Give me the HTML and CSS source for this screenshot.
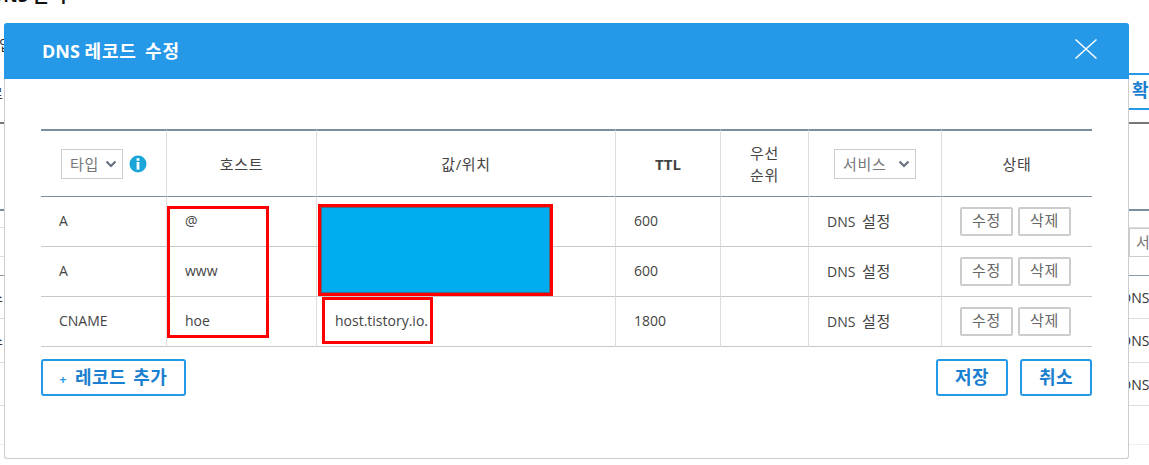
FILE: index.html
```html
<!DOCTYPE html>
<html lang="ko">
<head>
<meta charset="utf-8">
<title>DNS 레코드 수정</title>
<link rel="stylesheet" href="styles.css">
</head>
<body>
<div class="page">
  <h1 class="page-title">DNS <span class="ko-title">관리</span></h1>
  <div class="strips">
    <div class="strip strip-left">
      <div class="l-a">타입</div>
      <div class="l-b">로</div>
      <div class="l-c"></div>
      <div class="l-d"></div>
      <div class="l-e"></div>
      <div class="l-f"></div>
      <div class="l-row l-first">스</div>
      <div class="l-row l-tall">스</div>
      <div class="l-row">C</div>
      <div class="l-j"></div>
    </div>
    <div class="strip strip-right">
      <div class="r-tab">확인</div>
      <div class="r-rule"></div>
      <div class="r-head"></div>
      <div class="r-select-row"><span class="r-select">서비스</span></div>
      <div class="r-row r-first">DNS 설정</div>
      <div class="r-row r-tall">DNS 설정</div>
      <div class="r-row">DNS 설정</div>
      <div class="r-last"></div>
    </div>
  </div>
</div>

<section class="modal">
  <header class="modal-head">
    <h2 class="modal-title">DNS <span class="ko-title">레코드 수정</span></h2>
    <svg class="close" viewBox="0 0 24 22" width="24" height="22" aria-label="닫기"><path d="M1.5 1.5 22.5 20.5M22.5 1.5 1.5 20.5" fill="none" stroke="#fff" stroke-width="1.5"/></svg>
  </header>
  <div class="modal-body">
    <div class="table-wrap">
      <table class="records">
        <thead>
          <tr>
            <th class="c-type">
              <div class="type-head">
                <span class="fake-select sel-type"><span class="ko">타입</span><svg class="chev" viewBox="0 0 12 8" width="12" height="8"><path d="M1.5 1.5 6 6l4.5-4.5" fill="none" stroke="#67727e" stroke-width="2.2"/></svg></span>
                <svg class="info" viewBox="0 0 18 18" width="18" height="18"><circle cx="9" cy="9" r="8.5" fill="#1ba6d9"/><rect x="7.6" y="3.2" width="2.8" height="2.6" fill="#fff"/><rect x="7.6" y="7" width="2.8" height="7.6" fill="#fff"/></svg>
              </div>
            </th>
            <th class="c-host ko">호스트</th>
            <th class="c-value ko">값/위치</th>
            <th class="c-ttl ttl-head">TTL</th>
            <th class="c-prio ko">우선<br>순위</th>
            <th class="c-svc"><span class="fake-select sel-svc"><span class="ko">서비스</span><svg class="chev" viewBox="0 0 12 8" width="12" height="8"><path d="M1.5 1.5 6 6l4.5-4.5" fill="none" stroke="#67727e" stroke-width="2.2"/></svg></span></th>
            <th class="c-state ko">상태</th>
          </tr>
        </thead>
        <tbody>
          <tr>
            <td>A</td><td>@</td><td></td><td>600</td><td></td><td>DNS <span class="ko ko-gap">설정</span></td>
            <td><div class="row-btns"><button class="mini">수정</button><button class="mini">삭제</button></div></td>
          </tr>
          <tr>
            <td>A</td><td>www</td><td></td><td>600</td><td></td><td>DNS <span class="ko ko-gap">설정</span></td>
            <td><div class="row-btns"><button class="mini">수정</button><button class="mini">삭제</button></div></td>
          </tr>
          <tr>
            <td>CNAME</td><td>hoe</td><td>host.tistory.io.</td><td>1800</td><td></td><td>DNS <span class="ko ko-gap">설정</span></td>
            <td><div class="row-btns"><button class="mini">수정</button><button class="mini">삭제</button></div></td>
          </tr>
        </tbody>
      </table>
      <div class="mark mark-host"></div>
      <div class="mark mark-value"></div>
      <div class="mark mark-cname"></div>
    </div>
    <div class="actions">
      <button class="btn btn-add"><span class="plus">+</span>레코드 추가</button>
      <div class="actions-right">
        <button class="btn btn-short">저장</button>
        <button class="btn btn-short">취소</button>
      </div>
    </div>
  </div>
</section>
</body>
</html>
```

FILE: styles.css
```css
* { box-sizing: border-box; }
html, body { margin: 0; height: 100%; }
body {
  background: #fff;
  color: #444;
  font-family: "Open Sans", "Noto Sans CJK KR", sans-serif;
  font-size: 14px;
  overflow: hidden;
}

.ko { font-size: 15px; letter-spacing: 0.7px; }
.ko-gap { margin-left: 3px; }
.ko-title { letter-spacing: 0.8px; word-spacing: 3px; }

/* page behind the dialog */
.page { height: 465px; overflow: hidden; }
.page-title {
  margin: -17px 0 0 -10px;
  height: 29px;
  font-size: 18px;
  line-height: 24px;
  font-weight: 700;
  color: #111;
  white-space: nowrap;
}
.strips { display: flex; justify-content: space-between; }
.strip { overflow: hidden; color: #333; }
.strip-left { width: 4px; }
.strip-right { width: 20px; }

.l-a { height: 65px; padding-top: 23px; line-height: 20px; margin-left: -14px; width: 40px; white-space: nowrap; }
.l-b { height: 45px; line-height: 34px; margin-left: -10px; width: 30px; }
.l-c { height: 2px; margin-bottom: 85px; background: #777; }
.l-d { height: 18px; border-top: 2px solid #7d8f9f; }
.l-e { height: 29px; border-top: 1px solid #ddd; }
.l-f { height: 19px; border-top: 1px solid #ddd; }
.l-row {
  height: 43px;
  margin-left: -10px;
  width: 30px;
  border-top: 1px solid #ddd;
  line-height: 42px;
}
.l-first { border-top-color: #8c9aa8; }
.l-tall { height: 44px; }
.l-j { height: 40px; border-top: 1px solid #ddd; border-bottom: 1px solid #eee; }

.r-tab {
  margin-top: 61px;
  height: 37px;
  width: 40px;
  padding-left: 3px;
  border-top: 2px solid #2698e8;
  border-bottom: 2px solid #2698e8;
  color: #1a7fd0;
  font-size: 18px;
  font-weight: 700;
  line-height: 31px;
  white-space: nowrap;
}
.r-rule { height: 2px; margin-top: 12px; background: #777; }
.r-head { height: 18px; margin-top: 85px; border-top: 2px solid #7d8f9f; }
.r-select-row { height: 48px; border-top: 1px solid #ddd; }
.r-select {
  display: block;
  width: 40px;
  height: 29px;
  border: 1px solid #ccc;
  padding-left: 6px;
  line-height: 27px;
  color: #777;
  font-size: 15px;
  white-space: nowrap;
}
.r-row {
  height: 43px;
  width: 60px;
  margin-left: -8px;
  border-top: 1px solid #ddd;
  line-height: 44px;
  white-space: nowrap;
}
.r-first { border-top-color: #8c9aa8; }
.r-tall { height: 44px; }
.r-last { height: 40px; border-top: 1px solid #ddd; border-bottom: 1px solid #eee; }

/* dialog */
.modal {
  position: fixed;
  left: 4px;
  top: 23px;
  width: 1125px;
  height: 436px;
  background: #fff;
  border: 1px solid #ccc;
  border-top: 0;
  border-radius: 3px;
}
.modal-head {
  height: 56px;
  margin: 0 -1px;
  padding: 0 31px 0 38px;
  display: flex;
  align-items: center;
  justify-content: space-between;
  background: #2698e8;
  border-radius: 3px 3px 0 0;
}
.modal-title {
  margin: 0 0 2px;
  font-size: 18px;
  font-weight: 700;
  color: #fff;
}
.close { display: block; margin-top: -4px; }
.modal-body { padding: 50px 0 0 36px; }

.table-wrap { position: relative; width: 1051px; }
.records {
  width: 1051px;
  table-layout: fixed;
  border-collapse: separate;
  border-spacing: 0;
}
.c-type { width: 126px; }
.c-host { width: 150px; }
.c-value { width: 299px; }
.c-ttl { width: 105px; }
.c-prio { width: 88px; }
.c-svc { width: 133px; }
.c-state { width: 150px; }

.records th {
  height: 68px;
  padding: 0;
  border-top: 2px solid #7d8f9f;
  border-bottom: 1px solid #7d8f9f;
  border-right: 1px solid #ddd;
  font-weight: 400;
  line-height: 22px;
  text-align: center;
  color: #444;
}
.records th.ttl-head { font-weight: 700; font-size: 15px; }
.records td {
  height: 50px;
  padding: 0 0 2px 18px;
  border-bottom: 1px solid #c8c8c8;
  border-right: 1px solid #ddd;
  color: #444;
}
.records th:last-child, .records td:last-child { border-right: 0; }
.records td:last-child { padding-bottom: 0; }
.type-head { display: flex; align-items: center; padding-left: 20px; gap: 6px; }
.fake-select {
  display: inline-flex;
  align-items: center;
  justify-content: space-between;
  height: 30px;
  border: 1px solid #ccc;
  padding: 0 5px 0 8px;
  color: #777;
  text-align: left;
}
.sel-type { width: 62px; }
.sel-svc { width: 82px; }
.info { flex: none; }
.row-btns { display: flex; gap: 5px; }
.mini {
  width: 53px;
  height: 29px;
  padding: 0 0 4px;
  background: #fff;
  border: 2px solid #ccc;
  border-radius: 2px;
  color: #666;
  font-family: inherit;
  font-size: 15px;
  letter-spacing: 0.7px;
  line-height: 20px;
}

/* hand-drawn annotations over the table */
.mark { position: absolute; border: 3px solid #f00; }
.mark-host { left: 126px; top: 77px; width: 102px; height: 132px; }
.mark-value { left: 277px; top: 75px; width: 235px; height: 92px; background: #00aeef; box-shadow: inset 0 0 0 1px #4a6a80; }
.mark-cname { left: 281px; top: 168px; width: 111px; height: 47px; }

.actions { display: flex; justify-content: space-between; margin-top: 12px; width: 1051px; }
.actions-right { display: flex; gap: 12px; }
.btn {
  height: 37px;
  padding: 0 0 3px;
  background: #fff;
  border: 2px solid #2698e8;
  border-radius: 3px;
  color: #1a7fd0;
  font-family: inherit;
  font-size: 18px;
  font-weight: 700;
  letter-spacing: 0.5px;
  word-spacing: 2px;
}
.btn-add { width: 145px; }
.plus { font-size: 12px; margin-right: 8px; font-weight: 700; color: #2698e8; }
.btn-short { width: 72px; }
```
